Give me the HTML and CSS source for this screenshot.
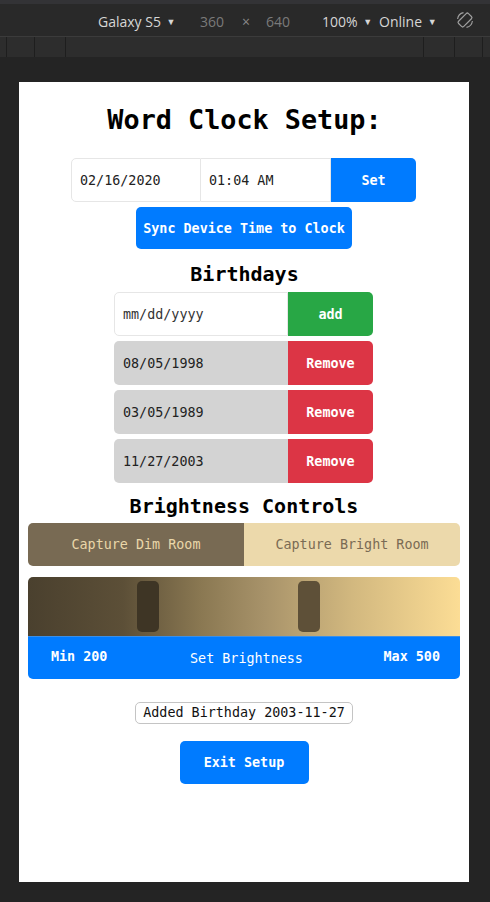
FILE: index.html
```html
<!DOCTYPE html>
<html>
<head>
<meta charset="utf-8">
<link rel="stylesheet" href="styles.css">
</head>
<body>
<div class="toolbar">
  <span class="tb-device">Galaxy S5 <span class="caret">▼</span></span>
  <span class="tb-dim">360</span>
  <span class="tb-x">×</span>
  <span class="tb-dim">640</span>
  <span class="tb-zoom">100% <span class="caret">▼</span></span>
  <span class="tb-net">Online <span class="caret">▼</span></span>
  <svg class="tb-rotate" width="20" height="20" viewBox="0 0 20 20">
    <rect x="6.3" y="3" width="7.4" height="14" rx="1.6" transform="rotate(45 10 10)" fill="none" stroke="#a0a0a0" stroke-width="1.2"/>
    <path d="M2.6 9 A7.5 7.5 0 0 1 8.5 2.6" fill="none" stroke="#a0a0a0" stroke-width="1.1"/>
    <path d="M17.4 11 A7.5 7.5 0 0 1 11.5 17.4" fill="none" stroke="#a0a0a0" stroke-width="1.1"/>
  </svg>
</div>
<div class="ruler">
  <div class="ruler-left"><i></i><i></i><i></i></div>
  <div class="ruler-right"><i></i><i></i><i></i></div>
</div>
<div class="stage">
  <div class="screen">
    <h1 class="title">Word Clock Setup:</h1>
    <div class="group time-group">
      <div class="field field-left">02/16/2020</div>
      <div class="field field-mid">01:04 AM</div>
      <div class="btn btn-blue btn-right">Set</div>
    </div>
    <div class="btn btn-blue sync">Sync Device Time to Clock</div>

    <h2 class="heading bday-heading">Birthdays</h2>
    <div class="bday-list">
      <div class="group bday-row">
        <div class="field field-left bday-input">mm/dd/yyyy</div>
        <div class="btn btn-green btn-right">add</div>
      </div>
      <div class="group bday-row">
        <div class="field-gray">08/05/1998</div>
        <div class="btn btn-red btn-right">Remove</div>
      </div>
      <div class="group bday-row">
        <div class="field-gray">03/05/1989</div>
        <div class="btn btn-red btn-right">Remove</div>
      </div>
      <div class="group bday-row">
        <div class="field-gray">11/27/2003</div>
        <div class="btn btn-red btn-right">Remove</div>
      </div>
    </div>

    <h2 class="heading bright-heading">Brightness Controls</h2>
    <div class="capture">
      <div class="cap cap-dim">Capture Dim Room</div>
      <div class="cap cap-bright">Capture Bright Room</div>
    </div>
    <div class="slider">
      <div class="track">
        <div class="thumb thumb-min"></div>
        <div class="thumb thumb-max"></div>
      </div>
      <div class="set-bar">
        <span class="set-min">Min 200</span>
        <span class="set-label">Set Brightness</span>
        <span class="set-max">Max 500</span>
      </div>
    </div>

    <div class="msg-wrap"><span class="msg">Added Birthday 2003-11-27</span></div>
    <div class="btn btn-blue exit">Exit Setup</div>
  </div>
</div>
</body>
</html>
```
FILE: styles.css
```css
* { box-sizing: border-box; }
html, body { margin: 0; padding: 0; }
body {
  background: #242424;
  width: 490px;
  height: 902px;
  overflow: hidden;
  font-family: "DejaVu Sans Mono", "Liberation Mono", monospace;
}

.toolbar {
  height: 37px;
  background: #292929;
  border-top: 4px solid #333336;
  border-bottom: 1px solid #3b3b3b;
  display: flex;
  align-items: center;
  padding: 3px 0 0 98px;
  font-family: "Open Sans", "Noto Sans", sans-serif;
  font-size: 14px;
  color: #d6d6d6;
}
.caret { font-size: 9px; position: relative; top: -2px; margin-left: 2px; }
.tb-device { width: 102px; }
.tb-dim { color: #7a7a7a; }
.tb-x { color: #8a8a8a; margin: 0 16px 0 18px; }
.tb-zoom { margin-left: 32px; width: 57px; }
.tb-net { width: 76px; }
.tb-rotate { margin-top: -3px; }

.ruler {
  height: 20px;
  background: #2d2d2d;
  display: flex;
  justify-content: space-between;
}
.ruler-left, .ruler-right { display: flex; height: 100%; }
.ruler i { display: block; width: 1px; height: 100%; background: #1e1e1e; }
.ruler-left i:nth-child(1) { margin-left: 6px; }
.ruler-left i:nth-child(2) { margin-left: 27px; }
.ruler-left i:nth-child(3) { margin-left: 30px; }
.ruler-right i:nth-child(1) { margin-right: 30px; }
.ruler-right i:nth-child(2) { margin-right: 27px; }
.ruler-right i:nth-child(3) { margin-right: 7px; }

.stage { padding: 25px 21px 0 19px; }
.screen {
  width: 450px;
  height: 800px;
  background: #fff;
  padding-top: 22px;
  display: flex;
  flex-direction: column;
  align-items: center;
  color: #000;
}

.title {
  margin: 0 0 0 1px;
  font-size: 26.8px;
  line-height: 32px;
  font-weight: bold;
}

.group { display: flex; }
.time-group { margin-top: 22px; height: 44px; width: 345px; margin-right: 1px; }
.field {
  height: 100%;
  border: 1px solid #e6e6e6;
  display: flex;
  align-items: center;
  padding-left: 8px;
  font-size: 13.4px;
  color: #222;
  background: #fff;
}
.field-left { border-radius: 5px 0 0 5px; }
.time-group .field { width: 130px; }
.field-mid { border-left: none; }

.btn {
  display: flex;
  align-items: center;
  justify-content: center;
  color: #fff;
  font-size: 13.4px;
  font-weight: bold;
}
.btn-right { border-radius: 0 5px 5px 0; width: 85px; height: 100%; }
.btn-blue { background: #007bff; }
.btn-green { background: #28a745; }
.btn-red { background: #dc3545; }

.sync {
  margin-top: 5px;
  width: 216px;
  height: 42px;
  border-radius: 5px;
}

.heading {
  margin: 0;
  font-size: 20px;
  line-height: 24px;
  font-weight: bold;
}
.bday-heading { margin-top: 13px; margin-left: 1px; }

.bday-list {
  margin-top: 6px;
  margin-right: 1px;
  display: flex;
  flex-direction: column;
  gap: 5px;
}
.bday-row { width: 259px; height: 44px; }
.bday-input { width: 174px; color: #333; }
.field-gray {
  width: 174px;
  height: 100%;
  background: #d3d3d3;
  border-radius: 5px 0 0 5px;
  display: flex;
  align-items: center;
  padding-left: 9px;
  font-size: 13.4px;
  color: #222;
}

.bright-heading { margin-top: 11px; }

.capture {
  margin-top: 5px;
  width: 432px;
  height: 43px;
  display: flex;
  border-radius: 5px;
  overflow: hidden;
}
.cap {
  flex: 1;
  display: flex;
  align-items: center;
  justify-content: center;
  font-size: 13.4px;
}
.cap-dim { background: #786a53; color: #ead7a9; }
.cap-bright { background: #ecd9ab; color: #7a6b54; }

.slider {
  margin-top: 11px;
  width: 432px;
  border-radius: 5px;
  overflow: hidden;
}
.track {
  position: relative;
  height: 59px;
  background: linear-gradient(to right, #4a402e 0%, #5c4f37 22%, #8a7852 40%, #a8936a 55%, #d2b87f 75%, #fcdd95 100%);
}
.thumb {
  position: absolute;
  top: 4px;
  width: 22px;
  height: 51px;
  border-radius: 5px;
}
.thumb-min { left: 109px; background: #3e3525; }
.thumb-max { left: 270px; background: #5e5038; }
.set-bar {
  height: 43px;
  background: #007bff;
  border-top: 1px solid #3a8fe8;
  color: #fff;
  display: flex;
  align-items: center;
  justify-content: space-between;
  padding: 0 20px 0 23px;
  font-size: 13.4px;
}
.set-min, .set-max { font-weight: bold; margin-top: -3px; }
.set-label { margin-left: 2px; margin-top: 1px; }

.msg-wrap { margin-top: 23px; height: 22px; }
.msg {
  display: inline-block;
  height: 22px;
  line-height: 20px;
  border: 1px solid #c4c4c4;
  border-radius: 5px;
  padding: 0 7px;
  font-size: 13.4px;
  color: #111;
}

.exit {
  margin-top: 17px;
  width: 129px;
  height: 43px;
  border-radius: 5px;
}
```
